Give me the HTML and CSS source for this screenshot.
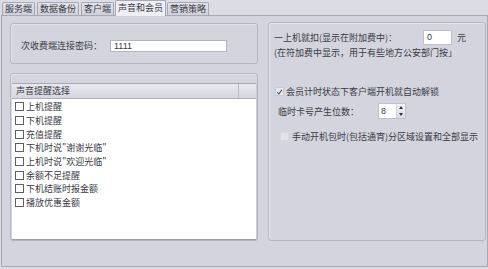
FILE: index.html
```html
<!DOCTYPE html>
<html lang="zh-CN">
<head>
    <meta charset="UTF-8">
    <title>声音和会员</title>
    <link rel="stylesheet" href="styles.css">
</head>
<body>
    <div class="tabs">
        <div class="tab">服务端</div>
        <div class="tab">数据备份</div>
        <div class="tab">客户端</div>
        <div class="tab active">声音和会员</div>
        <div class="tab">营销策略</div>
    </div>
    <div class="pane">
        <div class="col-left">
            <div class="group pwd-group">
                <span class="pwd-label">次收费端连接密码：</span>
                <div class="input pwd-input">1111</div>
            </div>
            <div class="group list-group">
                <div class="list">
                    <div class="list-head">
                        <span class="head-cell">声音提醒选择</span>
                        <span class="head-rest"></span>
                    </div>
                    <ul class="list-body">
                        <li><span class="box"></span>上机提醒</li>
                        <li><span class="box"></span>下机提醒</li>
                        <li><span class="box"></span>充值提醒</li>
                        <li><span class="box"></span>下机时说"谢谢光临"</li>
                        <li><span class="box"></span>上机时说"欢迎光临"</li>
                        <li><span class="box"></span>余额不足提醒</li>
                        <li><span class="box"></span>下机结账时报金额</li>
                        <li><span class="box"></span>播放优惠金额</li>
                    </ul>
                </div>
            </div>
        </div>
        <div class="group right-group">
            <div class="row fee-row">
                <span class="fee-label">一上机就扣(显示在附加费中)：</span>
                <div class="input fee-input">0</div>
                <span class="unit">元</span>
            </div>
            <div class="note">(在符加费中显示，用于有些地方公安部门按」</div>
            <div class="row check-row unlock-row">
                <span class="check checked">
                    <svg viewBox="0 0 9 9"><path d="M1.5 4.8 L3.6 7 L7.6 1.8" fill="none" stroke="#4a4a58" stroke-width="1.3"/></svg>
                </span>
                <span>会员计时状态下客户端开机就自动解锁</span>
            </div>
            <div class="row digits-row">
                <span class="digits-label">临时卡号产生位数：</span>
                <div class="spinner">
                    <div class="spin-text">8</div>
                    <div class="spin-btns">
                        <span class="arrow up"></span>
                        <span class="arrow down"></span>
                    </div>
                </div>
            </div>
            <div class="row check-row manual-row">
                <span class="check disabled"></span>
                <span>手动开机包时(包括通宵)分区域设置和全部显示</span>
            </div>
        </div>
    </div>
</body>
</html>
```

FILE: styles.css
```css
body {
    margin: 0;
    width: 488px;
    height: 269px;
    background: #dcdce4;
    font-family: "Noto Sans CJK SC", "Noto Sans", sans-serif;
    font-size: 9px;
    color: #3a3a44;
    overflow: hidden;
}
.tabs {
    display: flex;
    align-items: flex-end;
    gap: 2px;
    height: 15px;
    padding-left: 2px;
    position: relative;
    z-index: 1;
}
.tab {
    height: 12px;
    line-height: 12px;
    padding: 0 2px;
    border: 1px solid #a8a8b6;
    border-bottom: none;
    border-radius: 2px 2px 0 0;
    background: linear-gradient(#e2e2ea, #cfcfda);
    white-space: nowrap;
}
.tab.active {
    height: 15px;
    line-height: 14px;
    margin: 0 -1px -1px;
    background: #eeeef3;
}
.pane {
    display: flex;
    align-items: flex-start;
    gap: 10px;
    margin-left: 1px;
    width: 487px;
    height: 252px;
    box-sizing: border-box;
    border: 1px solid #a8a8b6;
    background: #d4d4de;
    padding: 6px 0 0 8px;
}
.col-left {
    width: 248px;
    margin-top: 1px;
    display: flex;
    flex-direction: column;
    gap: 9px;
}
.group {
    border: 1px solid #b6b6c2;
    border-radius: 3px;
    box-sizing: border-box;
    box-shadow: inset 1px 1px 0 #e4e4ec;
}
.pwd-group {
    height: 41px;
    display: flex;
    align-items: flex-start;
    padding: 16px 0 0 10px;
}
.pwd-label {
    width: 81px;
    line-height: 12px;
    margin-right: 8px;
    white-space: nowrap;
}
.input {
    box-sizing: border-box;
    background: #fff;
    border: 1px solid #b4b4c0;
    font-family: "Liberation Sans", sans-serif;
    font-size: 9px;
    padding-left: 3px;
}
.pwd-input {
    width: 117px;
    height: 12px;
    line-height: 10px;
}
.list-group {
    height: 168px;
    padding: 9px 1px 1px;
}
.list {
    height: 156px;
    background: #fff;
    box-shadow: 0 1px 1px #9e9eaa;
}
.list-head {
    display: flex;
    height: 16px;
    border-top: 1px solid #a8a8b4;
    border-bottom: 1px solid #b0b0bc;
    box-sizing: border-box;
    background: linear-gradient(#e8e8ee, #d6d6e0);
}
.head-cell {
    width: 222px;
    padding-left: 4px;
    line-height: 14px;
    border-right: 1px solid #bcbcc8;
}
.head-rest {
    flex: 1;
}
.list-body {
    list-style: none;
    margin: 0;
    padding: 1px 0 0 3px;
}
.list-body li {
    display: flex;
    align-items: center;
    height: 13.7px;
    white-space: nowrap;
}
.box {
    width: 9px;
    height: 9px;
    box-sizing: border-box;
    border: 1px solid #5e5e68;
    background: #fff;
    margin-right: 2px;
}
.right-group {
    width: 218px;
    height: 219px;
    padding: 7px 0 0 5px;
}
.row {
    display: flex;
    align-items: center;
}
.fee-row {
    height: 15px;
}
.fee-label {
    width: 149px;
    white-space: nowrap;
}
.fee-input {
    width: 29px;
    height: 15px;
    line-height: 13px;
    border-color: #c0c0cc;
}
.unit {
    margin-left: 5px;
}
.note {
    margin-top: 2px;
    line-height: 12px;
    white-space: nowrap;
}
.check-row {
    height: 12px;
    white-space: nowrap;
}
.unlock-row {
    margin-top: 26px;
    padding-left: 1px;
}
.check {
    width: 9px;
    height: 9px;
    box-sizing: border-box;
    margin-right: 2px;
    display: flex;
}
.check.checked {
    border: 1px solid #cacad4;
    background: #e6e6ee;
}
.check svg {
    width: 8px;
    height: 8px;
}
.digits-row {
    margin-top: 6px;
    padding-left: 4px;
    height: 16px;
}
.digits-label {
    width: 100px;
    white-space: nowrap;
}
.spinner {
    display: flex;
    width: 28px;
    height: 16px;
    border: 1px solid #c0c0cc;
    box-sizing: border-box;
    background: #fff;
}
.spin-text {
    flex: 1;
    font-family: "Liberation Sans", sans-serif;
    padding-left: 2px;
    line-height: 14px;
}
.spin-btns {
    width: 8px;
    display: flex;
    flex-direction: column;
    border-left: 1px solid #d0d0da;
    background: linear-gradient(#f4f4f8, #dcdce6);
}
.arrow {
    flex: 1;
    display: flex;
    align-items: center;
    justify-content: center;
}
.arrow::before {
    content: "";
    border-left: 2px solid transparent;
    border-right: 2px solid transparent;
}
.arrow.up::before {
    border-bottom: 3px solid #30303a;
}
.arrow.down::before {
    border-top: 3px solid #30303a;
}
.manual-row {
    margin-top: 11px;
    padding-left: 6px;
}
.check.disabled {
    border: 1px solid #d6d6de;
    background: #e2e2ea;
    margin-right: 3px;
}
```
